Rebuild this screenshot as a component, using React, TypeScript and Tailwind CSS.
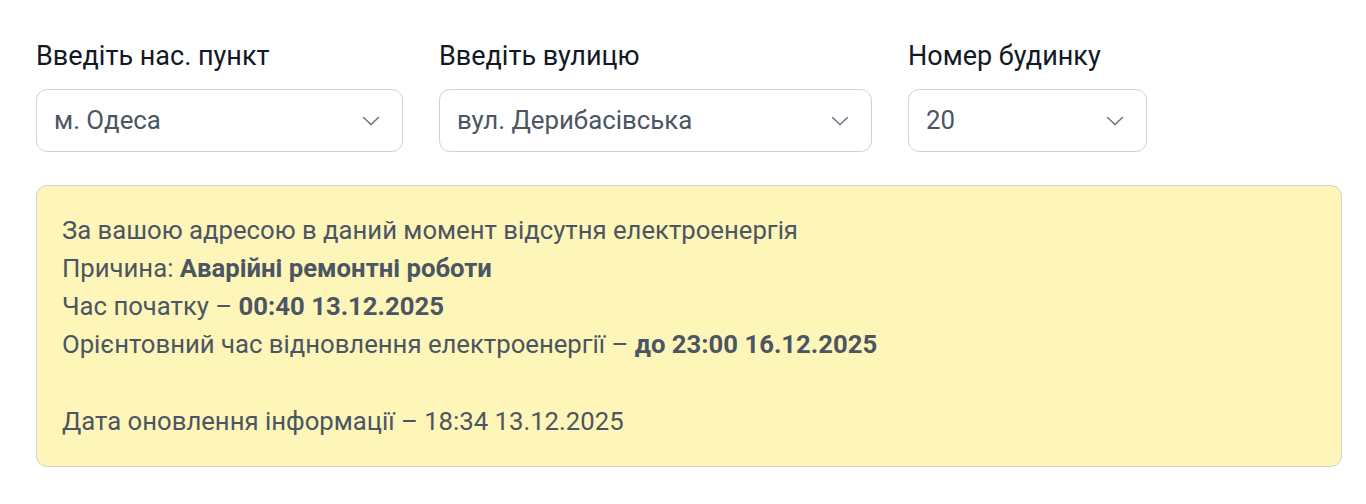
const Chevron = () => (
  <svg width="18" height="10" viewBox="0 0 18 10" fill="none" stroke="#6b7280" strokeWidth="1.5" strokeLinecap="round" strokeLinejoin="round">
    <path d="M1.5 1.5L9 8.5l7.5-7" />
  </svg>
);

const Field = ({ label, value, width }: { label: string; value: string; width: string }) => (
  <div className={`flex flex-col ${width}`}>
    <label className="mb-[15px] text-[27px] leading-[36px] text-[#111827]">{label}</label>
    <div className="flex h-[63px] items-center justify-between rounded-[11px] border border-[#cfd2d6] bg-white pl-[17px] pr-[22px]">
      <span className="text-[25.8px] text-[#4b5563]">{value}</span>
      <Chevron />
    </div>
  </div>
);

export default function App() {
  return (
    <div className="min-h-[504px] bg-white px-[36px] pt-[38px] font-['Roboto',sans-serif] antialiased">
      <div className="flex gap-[36px]">
        <Field label="Введіть нас. пункт" value="м. Одеса" width="w-[367px]" />
        <Field label="Введіть вулицю" value="вул. Дерибасівська" width="w-[433px]" />
        <Field label="Номер будинку" value="20" width="w-[239px]" />
      </div>
      <div className="mt-[33px] w-[1306px] rounded-[11px] border border-[#d0d0d0] bg-[#fef6b8] px-[25px] pt-[25px] pb-[26px] text-[25.7px] leading-[38px] text-[#4b5563]">
        <p>За вашою адресою в даний момент відсутня електроенергія</p>
        <p>
          Причина: <b className="font-bold">Аварійні ремонтні роботи</b>
        </p>
        <p>
          Час початку – <b className="font-bold">00:40 13.12.2025</b>
        </p>
        <p>
          Орієнтовний час відновлення електроенергії – <b className="font-bold">до 23:00 16.12.2025</b>
        </p>
        <p className="mt-[39px]">Дата оновлення інформації – 18:34 13.12.2025</p>
      </div>
    </div>
  );
}
